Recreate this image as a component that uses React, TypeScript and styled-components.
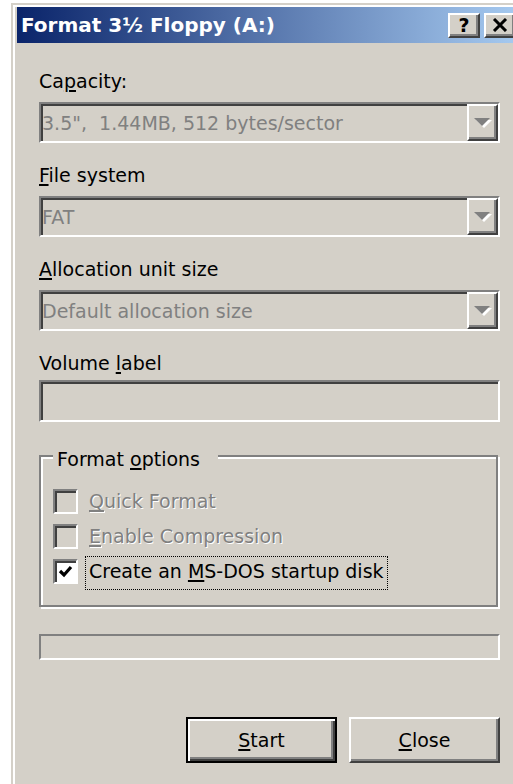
import React from "react";
import styled, { createGlobalStyle } from "styled-components";

// classic 3D palette
const face = "#d4d0c8";
const shadow = "#808080";
const dark = "#404040";

const GlobalStyle = createGlobalStyle`
  * { box-sizing: border-box; }
  html, body {
    margin: 0;
    padding: 0;
    background: #fff;
    overflow: hidden;
  }
  body {
    font-family: Tahoma, "DejaVu Sans", sans-serif;
    font-size: 19px;
    color: #000;
  }
  u { text-decoration-thickness: 2px; text-underline-offset: 2px; }
`;

const Window = styled.div`
  margin: 3px 0 0 11px;
  width: 511px;
  background: ${face};
  border-top: 2px solid ${face};
  border-left: 2px solid ${face};
  border-right: 2px solid ${dark};
  padding: 2px 2px 0 4px;
  box-shadow: inset 2px 2px 0 #fff;
`;

const TitleBar = styled.div`
  height: 36px;
  display: flex;
  align-items: center;
  gap: 4px;
  padding: 0 2px 0 4px;
  background: linear-gradient(to right, #0a246a, #a6caf0);
`;

const Title = styled.div`
  flex: 1;
  color: #fff;
  font-weight: bold;
  font-size: 20px;
  white-space: nowrap;
`;

const raised = `
  background: ${face};
  border: 2px solid;
  border-color: #fff ${dark} ${dark} #fff;
  box-shadow: inset -2px -2px 0 ${shadow};
`;

const sunken = `
  border: 2px solid;
  border-color: ${shadow} #fff #fff ${shadow};
  box-shadow: inset 2px 2px 0 ${dark};
`;

const CaptionButton = styled.div`
  ${raised}
  width: 32px;
  height: 25px;
  display: flex;
  align-items: center;
  justify-content: center;
  font-weight: bold;
  font-size: 19px;
  line-height: 1;
`;

const Content = styled.div`
  padding: 26px 18px 40px 22px;
`;

const Field = styled.div`
  display: flex;
  flex-direction: column;
  margin-bottom: 20px;
`;

const Label = styled.div<{ $gap: number }>`
  line-height: 24px;
  height: 24px;
  margin-bottom: ${(p) => p.$gap}px;
  white-space: nowrap;
`;

const Combo = styled.div`
  ${sunken}
  height: 41px;
  display: flex;
  background: ${face};
  color: ${shadow};
`;

const ComboText = styled.div`
  flex: 1;
  line-height: 33px;
  padding: 3px 0 0 1px;
  white-space: pre;
  overflow: hidden;
`;

const DropButton = styled.div`
  ${raised}
  width: 31px;
  display: flex;
  align-items: center;
  justify-content: center;
`;

const TextBox = styled.div`
  ${sunken}
  height: 42px;
  background: ${face};
`;

const Group = styled.div`
  position: relative;
  margin-top: 33px;
  width: calc(100% - 2px);
  border: 2px solid ${shadow};
  box-shadow: inset 2px 2px 0 #fff, 2px 2px 0 #fff;
  padding: 27px 0 16px 12px;
`;

const GroupTitle = styled.div`
  position: absolute;
  top: -10px;
  left: 12px;
  padding: 0 18px 0 4px;
  line-height: 24px;
  background: ${face};
`;

const CheckRow = styled.div`
  display: flex;
  align-items: flex-start;
  height: 35px;
  gap: 7px;
`;

const CheckBox = styled.div<{ $enabled: boolean }>`
  ${sunken}
  width: 25px;
  height: 25px;
  margin-top: 5px;
  display: flex;
  align-items: center;
  justify-content: center;
  background: ${(p) => (p.$enabled ? "#fff" : face)};
`;

const CheckLabel = styled.div<{ $enabled: boolean; $focused: boolean }>`
  margin-top: 2px;
  padding: 2px 3px 6px;
  line-height: 24px;
  white-space: nowrap;
  border: 1px ${(p) => (p.$focused ? "dotted #000" : "solid transparent")};
  color: ${(p) => (p.$enabled ? "#000" : shadow)};
  text-shadow: ${(p) => (p.$enabled ? "none" : "1px 1px 0 #fff")};
`;

const Progress = styled.div`
  margin-top: 27px;
  height: 26px;
  border: 2px solid;
  border-color: ${shadow} #fff #fff ${shadow};
`;

const Actions = styled.div`
  margin-top: 57px;
  display: flex;
  justify-content: flex-end;
  gap: 12px;
`;

const Button = styled.div<{ $default?: boolean }>`
  width: 151px;
  height: 46px;
  display: flex;
  align-items: center;
  justify-content: center;
  background: ${face};
  border: 2px solid;
  border-color: ${(p) => (p.$default ? "#000" : `#fff ${dark} ${dark} #fff`)};
  box-shadow: ${(p) =>
    p.$default
      ? `inset 2px 2px 0 #fff, inset -2px -2px 0 ${dark}, inset -4px -4px 0 ${shadow}`
      : `inset -2px -2px 0 ${shadow}`};
`;

function DownArrow() {
  return (
    <svg width="18" height="10" viewBox="0 0 18 10">
      <polygon points="2,2 18,2 10,10" fill="#fff" />
      <polygon points="0,0 16,0 8,8" fill={shadow} />
    </svg>
  );
}

function CloseGlyph() {
  return (
    <svg width="16" height="14" viewBox="0 0 16 14">
      <path d="M2 1 L14 13 M14 1 L2 13" stroke="#000" strokeWidth="3" />
    </svg>
  );
}

function CheckMark() {
  return (
    <svg width="17" height="17" viewBox="0 0 17 17">
      <path d="M3 8 L7 12 L14 4" stroke="#000" strokeWidth="3.2" fill="none" />
    </svg>
  );
}

function DropDown({ value }: { value: string }) {
  return (
    <Combo>
      <ComboText>{value}</ComboText>
      <DropButton>
        <DownArrow />
      </DropButton>
    </Combo>
  );
}

type Option = {
  label: React.ReactNode;
  enabled: boolean;
  checked: boolean;
  focused?: boolean;
};

const options: Option[] = [
  { label: <><u>Q</u>uick Format</>, enabled: false, checked: false },
  { label: <><u>E</u>nable Compression</>, enabled: false, checked: false },
  {
    label: <>Create an <u>M</u>S-DOS startup disk</>,
    enabled: true,
    checked: true,
    focused: true,
  },
];

export default function App() {
  return (
    <>
      <GlobalStyle />
      <Window>
        <TitleBar>
          <Title>Format 3½ Floppy (A:)</Title>
          <CaptionButton>?</CaptionButton>
          <CaptionButton>
            <CloseGlyph />
          </CaptionButton>
        </TitleBar>
        <Content>
          <Field>
            <Label $gap={9}>
              Ca<u>p</u>acity:
            </Label>
            <DropDown value={'3.5",  1.44MB, 512 bytes/sector'} />
          </Field>
          <Field>
            <Label $gap={9}>
              <u>F</u>ile system
            </Label>
            <DropDown value="FAT" />
          </Field>
          <Field>
            <Label $gap={9}>
              <u>A</u>llocation unit size
            </Label>
            <DropDown value="Default allocation size" />
          </Field>
          <Field>
            <Label $gap={5}>
              Volume <u>l</u>abel
            </Label>
            <TextBox />
          </Field>

          <Group>
            <GroupTitle>
              Format <u>o</u>ptions
            </GroupTitle>
            {options.map((o, i) => (
              <CheckRow key={i}>
                <CheckBox $enabled={o.enabled}>{o.checked && <CheckMark />}</CheckBox>
                <CheckLabel $enabled={o.enabled} $focused={!!o.focused}>
                  {o.label}
                </CheckLabel>
              </CheckRow>
            ))}
          </Group>

          <Progress />

          <Actions>
            <Button $default>
              <u>S</u>tart
            </Button>
            <Button>
              <u>C</u>lose
            </Button>
          </Actions>
        </Content>
      </Window>
    </>
  );
}
